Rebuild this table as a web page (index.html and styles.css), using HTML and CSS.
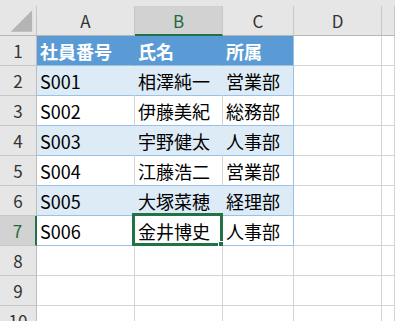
FILE: index.html
```html
<!DOCTYPE html>
<html lang="ja">
<head>
<meta charset="utf-8">
<link rel="stylesheet" href="styles.css">
</head>
<body>
<div class="sheet">
  <div class="corner"><svg class="tri" width="37" height="30" viewBox="0 0 37 30"><polygon points="33,4 33,26 11,26" fill="#b4b4b4"/></svg></div>
  <div class="ch">A</div>
  <div class="ch sel">B</div>
  <div class="ch">C</div>
  <div class="ch">D</div>
  <div class="ch"></div>

  <div class="rh">1</div>
  <div class="c th">社員番号</div>
  <div class="c th">氏名</div>
  <div class="c th last">所属</div>
  <div class="c"></div>
  <div class="c"></div>

  <div class="rh">2</div>
  <div class="c band">S001</div>
  <div class="c band">相澤純一</div>
  <div class="c band last">営業部</div>
  <div class="c"></div>
  <div class="c"></div>

  <div class="rh">3</div>
  <div class="c plain">S002</div>
  <div class="c plain">伊藤美紀</div>
  <div class="c plain last">総務部</div>
  <div class="c"></div>
  <div class="c"></div>

  <div class="rh">4</div>
  <div class="c band">S003</div>
  <div class="c band">宇野健太</div>
  <div class="c band last">人事部</div>
  <div class="c"></div>
  <div class="c"></div>

  <div class="rh">5</div>
  <div class="c plain">S004</div>
  <div class="c plain">江藤浩二</div>
  <div class="c plain last">営業部</div>
  <div class="c"></div>
  <div class="c"></div>

  <div class="rh">6</div>
  <div class="c band">S005</div>
  <div class="c band">大塚菜穂</div>
  <div class="c band last">経理部</div>
  <div class="c"></div>
  <div class="c"></div>

  <div class="rh sel">7</div>
  <div class="c plain">S006</div>
  <div class="c plain active">金井博史<span class="selbox"><span class="handle"></span></span></div>
  <div class="c plain last">人事部</div>
  <div class="c"></div>
  <div class="c"></div>

  <div class="rh">8</div>
  <div class="c"></div><div class="c"></div><div class="c"></div><div class="c"></div><div class="c"></div>
  <div class="rh">9</div>
  <div class="c"></div><div class="c"></div><div class="c"></div><div class="c"></div><div class="c"></div>
  <div class="rh">10</div>
  <div class="c"></div><div class="c"></div><div class="c"></div><div class="c"></div><div class="c"></div>
</div>
</body>
</html>
```

FILE: styles.css
```css
html, body {
  margin: 0;
  padding: 0;
  background: #ffffff;
  overflow: hidden;
}
body {
  width: 395px;
  height: 321px;
  font-family: "Noto Sans CJK JP", "Noto Sans", sans-serif;
}
.sheet {
  display: grid;
  grid-template-columns: 37px 98px 88px 71px 88px 1fr;
  grid-template-rows: 36px repeat(10, 30px);
  background: #e6e6e6;
  width: 395px;
  height: 336px;
}
.sheet > div {
  box-sizing: border-box;
  display: flex;
  align-items: center;
  white-space: nowrap;
  overflow: visible;
  min-width: 0;
}
.corner {
  margin-top: 6px;
  background: #e6e6e6;
  border-right: 1px solid #c6c6c6;
  border-bottom: 1px solid #b8b8b8;
  position: relative;
}
.tri {
  display: block;
}
.ch {
  margin-top: 6px;
  background: #e6e6e6;
  border-right: 1px solid #c6c6c6;
  border-bottom: 1px solid #b8b8b8;
  justify-content: center;
  font-size: 17px;
  color: #333333;
}
.ch.sel {
  background: #d2d2d2;
  border-bottom: 2px solid #217346;
  color: #1d6b3f;
}
.rh {
  background: #e6e6e6;
  border-right: 1px solid #bdbdbd;
  border-bottom: 1px solid #c6c6c6;
  justify-content: center;
  font-size: 17px;
  color: #333333;
}
.rh.sel {
  background: #d2d2d2;
  border-right: 2px solid #217346;
  color: #1d6b3f;
}
.c {
  background: #ffffff;
  border-right: 1px solid #d4d4d4;
  border-bottom: 1px solid #d4d4d4;
  padding-left: 3px;
  font-size: 18px;
  color: #000000;
  position: relative;
}
.c.th {
  background: #5b9bd5;
  border-right-color: #5b9bd5;
  border-bottom-color: #9bc2e6;
  color: #ffffff;
  font-weight: 700;
}
.c.band {
  background: #ddebf7;
  border-right-color: #ddebf7;
  border-bottom-color: #9bc2e6;
}
.c.plain {
  border-bottom-color: #9bc2e6;
}
.c.last {
  border-right-color: #9bc2e6;
}
.c.th.last {
  border-right-color: #9bc2e6;
}
.selbox {
  position: absolute;
  left: -3px;
  top: -3px;
  right: -1px;
  bottom: -1px;
  border: 3px solid #217346;
  box-sizing: border-box;
}
.handle {
  position: absolute;
  right: -5px;
  bottom: -5px;
  width: 5px;
  height: 5px;
  background: #217346;
  border: 1px solid #ffffff;
}
```
